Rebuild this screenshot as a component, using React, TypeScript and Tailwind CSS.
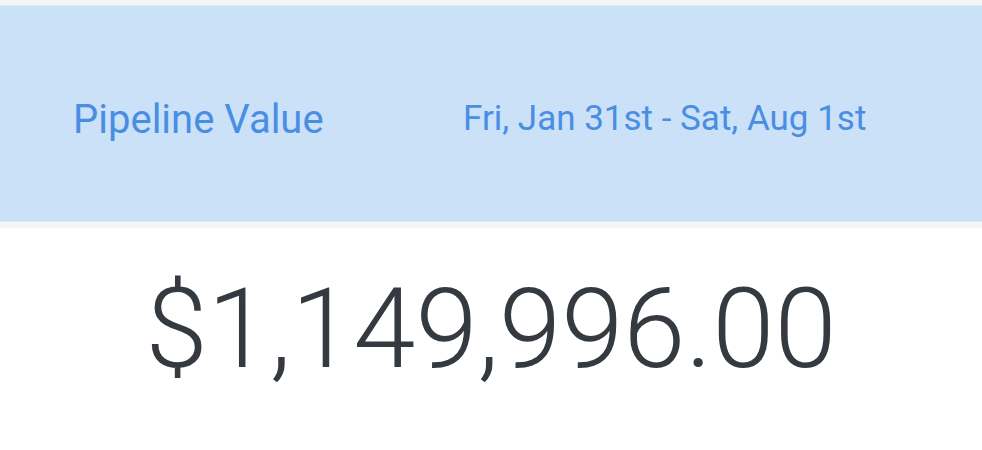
export default function App() {
  return (
    <div className="w-[982px] h-[450px] bg-white font-['Roboto',sans-serif] overflow-hidden">
      <div className="h-[6px] bg-[#f3f6f9] border-b border-[#dde8f3]" />
      <div className="h-[215px] bg-[#cae1f8] flex items-center pt-[12px]">
        <div className="pl-[73px] w-[463px] text-[40px] text-[#4a8ee3]">Pipeline Value</div>
        <div className="text-[35px] text-[#4a8ee3]">Fri, Jan 31st - Sat, Aug 1st</div>
      </div>
      <div className="h-[7px] bg-[#f3f6f9] border-t border-[#dde8f3]" />
      <div className="flex justify-center pt-[45px]">
        <div className="text-[112px] leading-none font-light text-[#343a40]">$1,149,996.00</div>
      </div>
    </div>
  );
}
